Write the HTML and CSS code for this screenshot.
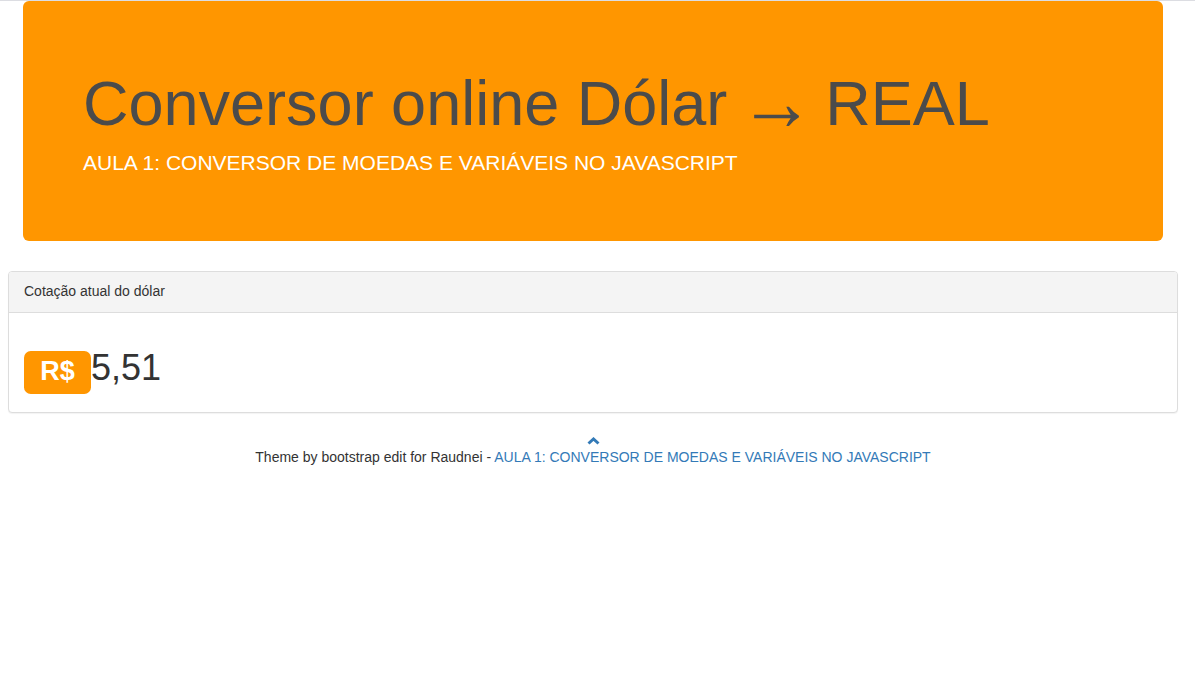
FILE: index.html
```html
<!DOCTYPE html>
<html lang="pt-BR">
<head>
<meta charset="utf-8">
<title>Conversor online Dólar → REAL</title>
<link rel="stylesheet" href="styles.css">
</head>
<body>
<div class="topline"></div>
<main class="page">
  <div class="container">
    <div class="jumbotron">
      <h1 class="jumbo-title">Conversor online Dólar <span class="arrow">→</span> REAL</h1>
      <p class="jumbo-sub">AULA 1: CONVERSOR DE MOEDAS E VARIÁVEIS NO JAVASCRIPT</p>
    </div>
  </div>
  <section class="panel">
    <div class="panel-heading">Cotação atual do dólar</div>
    <div class="panel-body">
      <h1 class="value"><span class="label">R$</span>5,51</h1>
    </div>
  </section>
  <footer class="footer">
    <a class="to-top" href="#">
      <svg width="13" height="8" viewBox="0 0 13 8"><polyline points="1.5,6.5 6.5,2 11.5,6.5" fill="none" stroke="#337ab7" stroke-width="3" stroke-linejoin="miter"/></svg>
    </a>
    <p class="credits">Theme by bootstrap edit for Raudnei - <a class="credits-link" href="#">AULA 1: CONVERSOR DE MOEDAS E VARIÁVEIS NO JAVASCRIPT</a></p>
  </footer>
</main>
</body>
</html>
```

FILE: styles.css
```css
* { box-sizing: border-box; }
html, body { margin: 0; padding: 0; background: #fff; }
body {
  font-family: "Liberation Sans", Arial, Helvetica, sans-serif;
  font-size: 14px;
  line-height: 1.42857;
  color: #333;
}
.topline { height: 1px; background: #dcdde2; }
.page { padding: 0 8px; width: 1186px; }
.container { width: 1170px; padding: 0 15px; }
.jumbotron {
  background: #ff9600;
  border-radius: 6px;
  padding: 48px 60px;
  margin-bottom: 30px;
}
.jumbo-title {
  margin: 20px 0 10px;
  font-size: 63px;
  font-weight: 400;
  line-height: 1.1;
  color: #4b4b4b;
}
.arrow {
  display: inline-block;
  transform: translateY(-1px) scale(1.2, 1.3);
}
.jumbo-sub {
  margin: 0 0 15px;
  font-size: 21px;
  line-height: 30px;
  color: #fff;
}
.panel {
  width: 1170px;
  border: 1px solid #ddd;
  border-radius: 4px;
  box-shadow: 0 1px 1px rgba(0,0,0,.05);
  margin-bottom: 20px;
  background: #fff;
}
.panel-heading {
  background: #f4f4f4;
  border-bottom: 1px solid #ddd;
  border-radius: 3px 3px 0 0;
  padding: 10px 15px;
  color: #333;
}
.panel-body { padding: 15px; }
.value {
  margin: 20px 0 10px;
  font-size: 36px;
  font-weight: 400;
  line-height: 39px;
  color: #333;
}
.label {
  display: inline;
  background: #ff9600;
  color: #fff;
  font-size: 75%;
  font-weight: 700;
  line-height: 1;
  padding: .2em .6em .3em;
  border-radius: .25em;
  vertical-align: baseline;
}
.footer {
  width: 1170px;
  text-align: center;
  margin-top: 1px;
}
.to-top { display: block; height: 14px; line-height: 0; }
.to-top svg { display: inline-block; margin-top: 4px; }
.credits { margin: 0; line-height: 20px; color: #333; }
.credits-link { color: #337ab7; text-decoration: none; }
```
